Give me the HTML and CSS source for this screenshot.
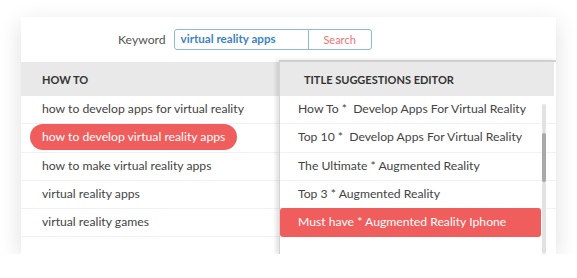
FILE: index.html
```html
<!DOCTYPE html>
<html lang="en">
<head>
    <meta charset="UTF-8">
    <title>title suggestions</title>
    <link rel="stylesheet" href="styles.css">
</head>
<body>
    <div class="card">
        <div class="search-bar">
            <span class="label">Keyword</span>
            <div class="search-box">
                <span class="query">virtual reality apps</span>
                <span class="search-btn">Search</span>
            </div>
        </div>
        <div class="columns">
            <div class="col col-left">
                <div class="col-head">HOW TO</div>
                <ul class="rows">
                    <li>how to develop apps for virtual reality</li>
                    <li><span class="pill">how to develop virtual reality apps</span></li>
                    <li>how to make virtual reality apps</li>
                    <li>virtual reality apps</li>
                    <li>virtual reality games</li>
                    <li></li>
                </ul>
            </div>
            <div class="col col-right">
                <div class="col-head">TITLE SUGGESTIONS EDITOR</div>
                <ul class="rows">
                    <li>How To *&nbsp; Develop Apps For Virtual Reality</li>
                    <li>Top 10 *&nbsp; Develop Apps For Virtual Reality</li>
                    <li>The Ultimate * Augmented Reality</li>
                    <li>Top 3 * Augmented Reality</li>
                    <li class="active">Must have * Augmented Reality Iphone</li>
                    <li></li>
                </ul>
                <div class="scroll"><div class="thumb"></div></div>
            </div>
        </div>
    </div>
</body>
</html>
```
FILE: styles.css
```css
body {
    margin: 0;
    background: #fff;
    font-family: Lato, "Open Sans", sans-serif;
    color: #444;
}
.card {
    margin: 17px 0 0 21px;
    width: 535px;
    height: 237px;
    background: #fff;
    box-shadow: 0 6px 22px rgba(0, 0, 0, 0.13);
    overflow: hidden;
}
.search-bar {
    height: 44px;
    display: flex;
    align-items: center;
    padding-left: 97px;
    box-sizing: border-box;
}
.label {
    font-size: 12.2px;
    color: #555;
    margin-right: 8px;
}
.search-box {
    display: flex;
    height: 21px;
    width: 198px;
    border: 1px solid #8fb8e0;
    border-radius: 3px;
    box-sizing: border-box;
}
.query {
    width: 127px;
    border-right: 1px solid #8fb8e0;
    padding-left: 6px;
    font-size: 11.6px;
    font-weight: bold;
    color: #3d83c8;
    line-height: 17px;
}
.search-btn {
    flex: 1;
    text-align: center;
    font-size: 11px;
    color: #f27272;
    line-height: 19px;
}
.columns {
    display: flex;
    height: 193px;
}
.col {
    position: relative;
}
.col-left {
    width: 258px;
    padding-top: 1px;
}
.col-right {
    flex: 1;
    border-top: 2px solid #cfcfcf;
    margin-top: -1px;
    box-shadow: -3px 0 4px rgba(0, 0, 0, 0.12);
    border-left: 1px solid #d4d4d4;
}
.col-head {
    height: 34px;
    background: #e9e9e9;
    font-size: 11px;
    font-weight: bold;
    color: #333;
    line-height: 36px;
    padding-left: 21px;
}
.col-right .col-head {
    margin-right: 2px;
    padding-left: 24px;
}
.rows {
    list-style: none;
    margin: 0;
    padding: 0;
}
.rows li {
    height: 28.3px;
    box-sizing: border-box;
    border-bottom: 1px solid #f1f1f1;
    font-size: 12.2px;
    line-height: 25px;
    padding-left: 21px;
    white-space: nowrap;
}
.col-right .rows li {
    padding-left: 18px;
}
.pill {
    display: inline-block;
    margin-left: -12px;
    padding: 0 12px;
    height: 26px;
    line-height: 26px;
    border-radius: 13px;
    background: #f05d5d;
    color: #fff;
}
.col-right .rows li.active {
    background: #f05d5d;
    color: #fff;
    margin-right: 15px;
    border-radius: 3px;
    border-bottom: none;
    margin-top: -1px;
    height: 29.3px;
    line-height: 28px;
}
.scroll {
    position: absolute;
    right: 10px;
    top: 42px;
    bottom: 0;
    width: 4px;
    background: #e2e2e2;
    border-radius: 2px;
}
.thumb {
    margin-top: 29px;
    height: 49px;
    background: #a9a9a9;
    border-radius: 2px;
}
```
